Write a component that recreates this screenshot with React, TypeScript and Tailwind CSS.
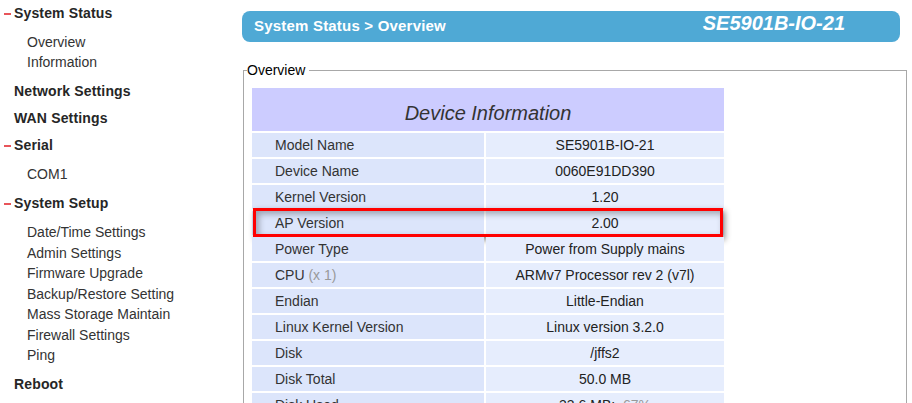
import React from "react";

type MenuGroup = { title: string; open?: boolean; items?: string[] };

const menu: MenuGroup[] = [
  { title: "System Status", open: true, items: ["Overview", "Information"] },
  { title: "Network Settings" },
  { title: "WAN Settings" },
  { title: "Serial", open: true, items: ["COM1"] },
  {
    title: "System Setup",
    open: true,
    items: [
      "Date/Time Settings",
      "Admin Settings",
      "Firmware Upgrade",
      "Backup/Restore Setting",
      "Mass Storage Maintain",
      "Firewall Settings",
      "Ping",
    ],
  },
  { title: "Reboot" },
];

const rows: { label: React.ReactNode; value: React.ReactNode; mark?: boolean }[] = [
  { label: "Model Name", value: "SE5901B-IO-21" },
  { label: "Device Name", value: "0060E91DD390" },
  { label: "Kernel Version", value: "1.20" },
  { label: "AP Version", value: "2.00", mark: true },
  { label: "Power Type", value: "Power from Supply mains" },
  {
    label: (
      <span>
        CPU <span className="text-[#999]">(x 1)</span>
      </span>
    ),
    value: "ARMv7 Processor rev 2 (v7l)",
  },
  { label: "Endian", value: "Little-Endian" },
  { label: "Linux Kernel Version", value: "Linux version 3.2.0" },
  { label: "Disk", value: "/jffs2" },
  { label: "Disk Total", value: "50.0 MB" },
  {
    label: "Disk Used",
    value: (
      <span>
        33.6 MB; &nbsp;<span className="text-[#999]">67%</span>
      </span>
    ),
  },
  { label: "Disk Free", value: "16.4 MB" },
];

function Sidebar() {
  return (
    <div className="w-[242px] shrink-0">
      {menu.map((g) => (
        <div key={g.title}>
          <div className="h-[27px] flex items-center text-[14px] font-bold tracking-[0.15px] text-[#262626]">
            <span className="w-[14px] flex items-center pl-[4px]">
              {g.open && <span className="block w-[7px] h-[2px] bg-[#e8555a] mt-[1px]" />}
            </span>
            {g.title}
          </div>
          {g.items && (
            <div className="py-[5.2px]">
              {g.items.map((it) => (
                <div key={it} className="h-[20.5px] flex items-center pl-[27px] text-[14px] text-[#333]">
                  {it}
                </div>
              ))}
            </div>
          )}
        </div>
      ))}
    </div>
  );
}

export default function App() {
  return (
    <div className="flex h-[403px] overflow-hidden bg-white font-['Liberation_Sans',Arial,sans-serif]">
      <Sidebar />
      <div className="flex-1 pt-[11px] pr-[5px]">
        <div className="h-[31px] mr-[7px] rounded-[8px] bg-[#4fa9d5] flex items-center justify-between pl-[12px] pr-[55px] text-white">
          <span className="text-[15px] font-bold tracking-[0.2px]">System Status &gt; Overview</span>
          <span className="text-[20px] font-bold italic pb-[7px]">SE5901B-IO-21</span>
        </div>

        <fieldset className="mt-[20px] ml-[1px] border border-[#a8a8a8] pl-[8px] pb-[10px]">
          <legend className="-ml-[5px] pr-[4px] text-[14px] leading-[16px] text-black">Overview</legend>
          <div className="w-[472px] mt-[10px]">
            <div className="h-[43px] bg-[#ccccff] flex items-end justify-center pb-[3px] text-[20px] italic text-[#333]">
              Device Information
            </div>
            {rows.map((r, i) => (
              <div key={i} className="relative flex gap-[2px] pt-[2px] text-[14px] leading-[16px]">
                <div className="w-[232px] h-[24px] bg-[#dce5fb] flex items-center pl-[23px] pb-[1px] text-[#333]">
                  {r.label}
                </div>
                <div className="flex-1 h-[24px] bg-[#e6edfd] flex items-center justify-center pb-[1px] text-[#222]">
                  {r.value}
                </div>
                {r.mark && (
                  <div className="absolute -top-[1px] -bottom-[2px] left-[1px] right-[1px] border-[3px] border-[#f00] shadow-[2px_3px_6px_rgba(0,0,0,0.45),inset_3px_3px_6px_rgba(0,0,0,0.3)]" />
                )}
              </div>
            ))}
          </div>
        </fieldset>
      </div>
    </div>
  );
}
